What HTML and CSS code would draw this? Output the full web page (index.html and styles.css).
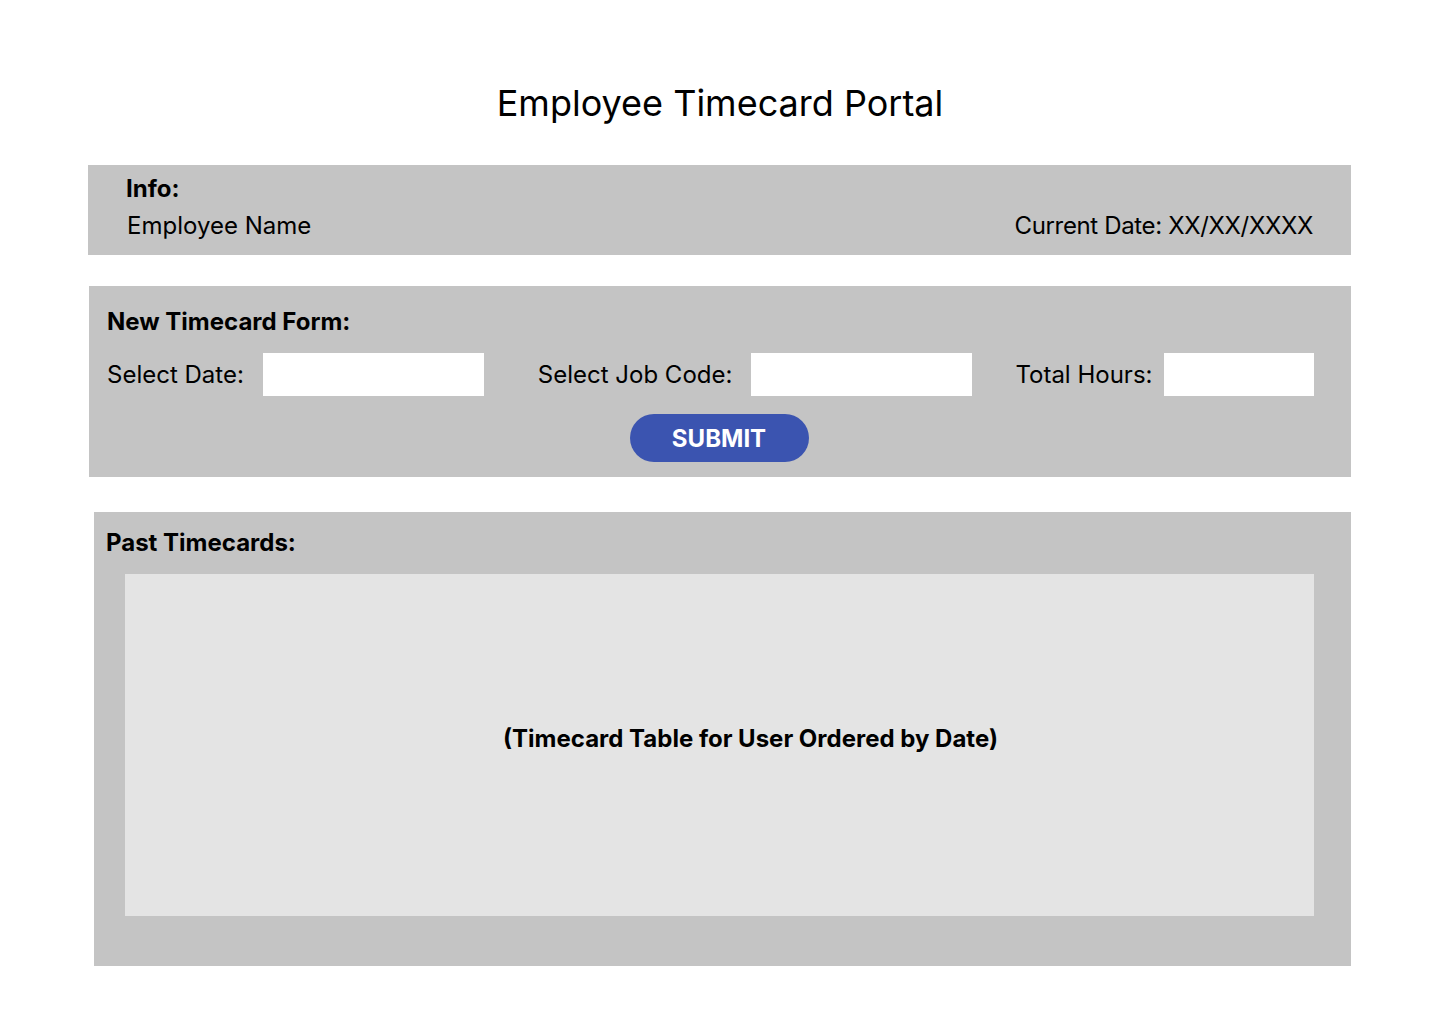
FILE: index.html
```html
<!DOCTYPE html>
<html lang="en">
<head>
<meta charset="utf-8">
<title>Employee Timecard Portal</title>
<link rel="stylesheet" href="styles.css">
</head>
<body>
<main class="page">
  <h1 class="title">Employee Timecard Portal</h1>

  <section class="panel info">
    <h2 class="info-heading">Info:</h2>
    <div class="info-row">
      <span>Employee Name</span>
      <span class="current-date">Current Date: XX/XX/XXXX</span>
    </div>
  </section>

  <section class="panel form">
    <h2 class="form-heading">New Timecard Form:</h2>
    <div class="fields">
      <label class="field field-date"><span class="field-label">Select Date:</span><input class="input input-wide" type="text"></label>
      <label class="field field-job"><span class="field-label">Select Job Code:</span><input class="input input-wide" type="text"></label>
      <label class="field field-hours"><span class="field-label">Total Hours:</span><input class="input input-narrow" type="text"></label>
    </div>
    <div class="actions">
      <button class="submit" type="button">SUBMIT</button>
    </div>
  </section>

  <section class="panel past">
    <h2 class="past-heading">Past Timecards:</h2>
    <div class="table-box">
      <p class="table-text">(Timecard Table for User Ordered by Date)</p>
    </div>
  </section>
</main>
</body>
</html>
```

FILE: styles.css
```css
* { box-sizing: border-box; }

html, body {
  margin: 0;
  padding: 0;
  background: #ffffff;
}

body {
  font-family: Inter, "Noto Sans", "Liberation Sans", sans-serif;
  color: #000000;
  font-size: 24px;
  line-height: 29px;
}

.page {
  display: flex;
  flex-direction: column;
  padding-top: 81px;
}

h1, h2, p { margin: 0; }

.title {
  font-size: 36px;
  line-height: 44px;
  font-weight: 400;
  text-align: center;
  margin-bottom: 40px;
}

.panel {
  background: #c4c4c4;
  margin-right: 89px;
}

/* Info panel */
.info {
  margin-left: 88px;
  height: 90px;
  padding: 9px 38px 0 38px;
}

.info-heading {
  font-size: 24px;
  font-weight: 700;
  line-height: 29px;
  margin-bottom: 8px;
}

.info-row {
  display: flex;
  justify-content: space-between;
  padding-left: 1px;
}

.current-date { letter-spacing: -0.35px; }

/* Form panel */
.form {
  margin-left: 89px;
  margin-top: 31px;
  height: 191px;
  padding: 21px 37px 0 18px;
}

.form-heading {
  font-size: 24px;
  font-weight: 700;
  line-height: 29px;
  margin-bottom: 17px;
}

.fields {
  display: flex;
  align-items: center;
}

.field {
  flex: none;
  display: flex;
  align-items: center;
  gap: 19px;
}

.field-label {
  white-space: nowrap;
  flex: none;
}

.field-job { margin-left: 54px; }
.field-hours { margin-left: 43px; gap: 12px; }

.input {
  flex: none;
  height: 43px;
  border: none;
  background: #ffffff;
  padding: 0 8px;
  font: inherit;
  outline: none;
}

.input-wide { width: 221px; }
.input-narrow { width: 150px; }

.actions {
  display: flex;
  justify-content: center;
  margin-top: 18px;
  padding-left: 17px;
}

.submit {
  width: 179px;
  height: 48px;
  border: none;
  border-radius: 24px;
  background: #3b54b0;
  color: #ffffff;
  font-family: inherit;
  font-size: 24px;
  font-weight: 700;
  padding: 0;
  cursor: pointer;
}

/* Past timecards panel */
.past {
  margin-left: 94px;
  margin-top: 35px;
  height: 454px;
  padding: 16px 37px 0 12px;
  display: flex;
  flex-direction: column;
}

.past-heading {
  font-size: 24px;
  font-weight: 700;
  line-height: 29px;
  margin-bottom: 17px;
}

.table-box {
  margin-left: 19px;
  height: 342px;
  background: #e4e4e4;
  display: flex;
  align-items: center;
  justify-content: center;
  padding-left: 62px;
  padding-bottom: 14px;
}

.table-text {
  font-weight: 700;
  font-size: 24px;
  line-height: 29px;
}
```
